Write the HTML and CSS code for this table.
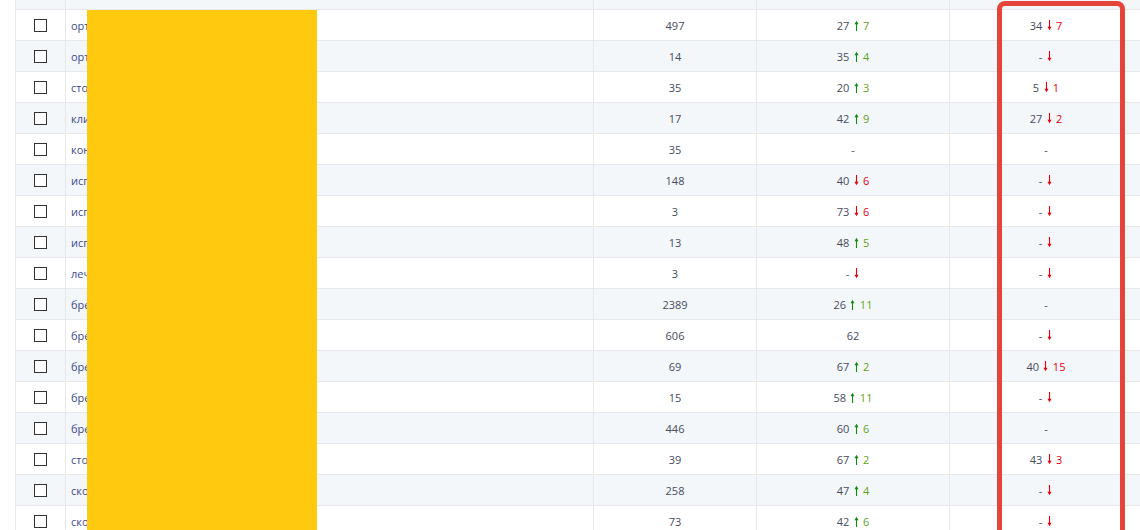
FILE: index.html
```html
<!DOCTYPE html>
<html lang="ru">
<head>
<meta charset="utf-8">
<link rel="stylesheet" href="styles.css">
</head>
<body>
<svg class="defs" width="0" height="0" aria-hidden="true">
  <defs>
    <symbol id="arr-up" viewBox="0 0 7 11"><path d="M3.5 11V3.5" stroke="#0f8a0f" stroke-width="1.1" fill="none"/><path d="M1.5 4.2L3.5 0.8L5.5 4.2Z" fill="#0f8a0f"/></symbol>
    <symbol id="arr-dn" viewBox="0 0 7 11"><path d="M3.5 0V7.5" stroke="#e3000f" stroke-width="1.1" fill="none"/><path d="M1.5 6.8L3.5 10.2L5.5 6.8Z" fill="#e3000f"/></symbol>
  </defs>
</svg>
<div class="wrap">
  <div class="grid">
    <div class="row alt"><div class="c chk"></div><div class="c name"></div><div class="c num"></div><div class="c num"></div><div class="c num"></div></div>
    <div class="row"><div class="c chk"><span class="box"></span></div><div class="c name"><a>ортопедический матрас</a></div><div class="c num"><span>497</span></div><div class="c num"><span>27 <svg class="ar"><use href="#arr-up"/></svg> <b class="g">7</b></span></div><div class="c num"><span>34 <svg class="ar"><use href="#arr-dn"/></svg> <b class="r">7</b></span></div></div>
    <div class="row alt"><div class="c chk"><span class="box"></span></div><div class="c name"><a>ортопед</a></div><div class="c num"><span>14</span></div><div class="c num"><span>35 <svg class="ar"><use href="#arr-up"/></svg> <b class="g">4</b></span></div><div class="c num"><span>- <svg class="ar"><use href="#arr-dn"/></svg></span></div></div>
    <div class="row"><div class="c chk"><span class="box"></span></div><div class="c name"><a>стоматология</a></div><div class="c num"><span>35</span></div><div class="c num"><span>20 <svg class="ar"><use href="#arr-up"/></svg> <b class="g">3</b></span></div><div class="c num"><span>5 <svg class="ar"><use href="#arr-dn"/></svg> <b class="r">1</b></span></div></div>
    <div class="row alt"><div class="c chk"><span class="box"></span></div><div class="c name"><a>клиника</a></div><div class="c num"><span>17</span></div><div class="c num"><span>42 <svg class="ar"><use href="#arr-up"/></svg> <b class="g">9</b></span></div><div class="c num"><span>27 <svg class="ar"><use href="#arr-dn"/></svg> <b class="r">2</b></span></div></div>
    <div class="row"><div class="c chk"><span class="box"></span></div><div class="c name"><a>консультация</a></div><div class="c num"><span>35</span></div><div class="c num"><span>-</span></div><div class="c num"><span>-</span></div></div>
    <div class="row alt"><div class="c chk"><span class="box"></span></div><div class="c name"><a>исправление прикуса</a></div><div class="c num"><span>148</span></div><div class="c num"><span>40 <svg class="ar"><use href="#arr-dn"/></svg> <b class="r">6</b></span></div><div class="c num"><span>- <svg class="ar"><use href="#arr-dn"/></svg></span></div></div>
    <div class="row"><div class="c chk"><span class="box"></span></div><div class="c name"><a>исправление зубов</a></div><div class="c num"><span>3</span></div><div class="c num"><span>73 <svg class="ar"><use href="#arr-dn"/></svg> <b class="r">6</b></span></div><div class="c num"><span>- <svg class="ar"><use href="#arr-dn"/></svg></span></div></div>
    <div class="row alt"><div class="c chk"><span class="box"></span></div><div class="c name"><a>исправить прикус</a></div><div class="c num"><span>13</span></div><div class="c num"><span>48 <svg class="ar"><use href="#arr-up"/></svg> <b class="g">5</b></span></div><div class="c num"><span>- <svg class="ar"><use href="#arr-dn"/></svg></span></div></div>
    <div class="row"><div class="c chk"><span class="box"></span></div><div class="c name"><a>лечение зубов</a></div><div class="c num"><span>3</span></div><div class="c num"><span>- <svg class="ar"><use href="#arr-dn"/></svg></span></div><div class="c num"><span>- <svg class="ar"><use href="#arr-dn"/></svg></span></div></div>
    <div class="row alt"><div class="c chk"><span class="box"></span></div><div class="c name"><a>брекеты</a></div><div class="c num"><span>2389</span></div><div class="c num"><span>26 <svg class="ar"><use href="#arr-up"/></svg> <b class="g">11</b></span></div><div class="c num"><span>-</span></div></div>
    <div class="row"><div class="c chk"><span class="box"></span></div><div class="c name"><a>брекеты цена</a></div><div class="c num"><span>606</span></div><div class="c num"><span>62</span></div><div class="c num"><span>- <svg class="ar"><use href="#arr-dn"/></svg></span></div></div>
    <div class="row alt"><div class="c chk"><span class="box"></span></div><div class="c name"><a>брекеты стоимость</a></div><div class="c num"><span>69</span></div><div class="c num"><span>67 <svg class="ar"><use href="#arr-up"/></svg> <b class="g">2</b></span></div><div class="c num"><span>40 <svg class="ar"><use href="#arr-dn"/></svg> <b class="r">15</b></span></div></div>
    <div class="row"><div class="c chk"><span class="box"></span></div><div class="c name"><a>брекеты установка</a></div><div class="c num"><span>15</span></div><div class="c num"><span>58 <svg class="ar"><use href="#arr-up"/></svg> <b class="g">11</b></span></div><div class="c num"><span>- <svg class="ar"><use href="#arr-dn"/></svg></span></div></div>
    <div class="row alt"><div class="c chk"><span class="box"></span></div><div class="c name"><a>брекет система</a></div><div class="c num"><span>446</span></div><div class="c num"><span>60 <svg class="ar"><use href="#arr-up"/></svg> <b class="g">6</b></span></div><div class="c num"><span>-</span></div></div>
    <div class="row"><div class="c chk"><span class="box"></span></div><div class="c name"><a>стоимость брекетов</a></div><div class="c num"><span>39</span></div><div class="c num"><span>67 <svg class="ar"><use href="#arr-up"/></svg> <b class="g">2</b></span></div><div class="c num"><span>43 <svg class="ar"><use href="#arr-dn"/></svg> <b class="r">3</b></span></div></div>
    <div class="row alt"><div class="c chk"><span class="box"></span></div><div class="c name"><a>сколько стоят брекеты</a></div><div class="c num"><span>258</span></div><div class="c num"><span>47 <svg class="ar"><use href="#arr-up"/></svg> <b class="g">4</b></span></div><div class="c num"><span>- <svg class="ar"><use href="#arr-dn"/></svg></span></div></div>
    <div class="row"><div class="c chk"><span class="box"></span></div><div class="c name"><a>сколько стоит</a></div><div class="c num"><span>73</span></div><div class="c num"><span>42 <svg class="ar"><use href="#arr-up"/></svg> <b class="g">6</b></span></div><div class="c num"><span>- <svg class="ar"><use href="#arr-dn"/></svg></span></div></div>
  </div>
  <div class="redact"></div>
  <div class="frame"></div>
</div>
</body>
</html>
```
FILE: styles.css
```css
html, body {
  margin: 0;
  padding: 0;
  background: #fff;
  overflow: hidden;
  width: 1140px;
  height: 530px;
}
body {
  font-family: "Open Sans", "Liberation Sans", sans-serif;
  font-size: 11px;
  color: #454b5c;
}
.defs {
  position: absolute;
  width: 0;
  height: 0;
}
.wrap {
  position: relative;
  margin: -21px 0 0 15px;
}
.grid {
  display: flex;
  flex-direction: column;
}
.row {
  display: grid;
  grid-template-columns: 51px 528px 163px 193px 193px;
  height: 31px;
  box-sizing: border-box;
  border-bottom: 1px solid #e6e8ec;
  background: #fff;
}
.row.alt {
  background: #f4f7fa;
}
.c {
  box-sizing: border-box;
  border-right: 1px solid #e6e8ec;
  display: flex;
  align-items: center;
  white-space: nowrap;
  overflow: hidden;
}
.chk {
  border-left: 1px solid #e6e8ec;
  justify-content: center;
  padding-right: 1px;
}
.box {
  width: 13px;
  height: 13px;
  box-sizing: border-box;
  border: 1.5px solid #333;
  background: #fff;
  margin-top: 1px;
}
.name {
  padding-left: 5px;
}
.name a {
  color: #3b4a8e;
}
.num {
  justify-content: center;
}
.num b {
  font-weight: normal;
}
.g { color: #5ea516; }
.r { color: #e3000f; }
.ar {
  width: 7px;
  height: 11px;
  vertical-align: -1px;
  margin: 0 0.5px;
}
.redact {
  position: absolute;
  left: 72px;
  top: 31px;
  width: 230px;
  height: 560px;
  background: #fec90f;
}
.frame {
  position: absolute;
  left: 982px;
  top: 22px;
  width: 128px;
  height: 600px;
  box-sizing: border-box;
  border: 5px solid #e5443a;
  border-radius: 8px;
}
```
